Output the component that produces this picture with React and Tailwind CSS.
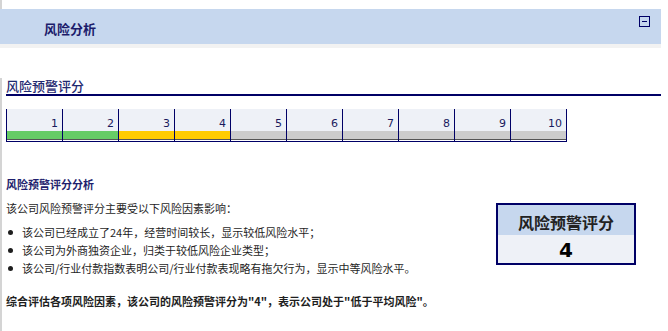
export default function App() {
  const cells = [1, 2, 3, 4, 5, 6, 7, 8, 9, 10];
  const barColor = (n) => (n <= 2 ? "bg-[#66cc66]" : n <= 4 ? "bg-[#ffcc00]" : "bg-[#cccccc]");
  const bullets = [
    "该公司已经成立了24年，经营时间较长，显示较低风险水平；",
    "该公司为外商独资企业，归类于较低风险企业类型；",
    "该公司/行业付款指数表明公司/行业付款表现略有拖欠行为，显示中等风险水平。",
  ];
  return (
    <div className="w-[668px] h-[331px] bg-white overflow-hidden font-['Noto_Sans_CJK_SC',sans-serif] text-[#1e1e1e]">
      <div className="h-[9px] border-l-2 border-[#d4d4d4]" />
      <div className="w-[661px] h-[35px] bg-[#c6d7ee] flex items-start justify-between pl-[44px] pr-[11px]">
        <span className="mt-[12px] text-[13px] leading-[16px] font-bold text-[#1c1c6b]">风险分析</span>
        <span className="mt-[7px] w-[11px] h-[11px] border border-[#000066] flex items-center justify-center">
          <span className="w-[5px] h-[1px] bg-[#000066]" />
        </span>
      </div>
      <div className="w-[661px] h-[4px] bg-[#f2f2f2]" />
      <div className="border-l-2 border-[#d4d4d4] pl-[4px] h-[283px]">
        <div className="mt-[30px] w-[655px] border-b-2 border-[#000066] text-[13px] leading-[16px] font-medium text-[#1f2970]">
          风险预警评分
        </div>
        <div className="mt-[13px] flex w-[561px] border-r border-b border-[#000066]">
          {cells.map((n) => (
            <div key={n} className="w-[56px] border-l border-[#000066] flex flex-col">
              <div className="h-[22px] bg-[#eef1f7] flex items-end justify-end pr-[4px] pb-[1px] font-['DejaVu_Sans',sans-serif] text-[11px] leading-[13px] text-[#1a1a5e]">
                {n}
              </div>
              <div className={`h-[8px] ${barColor(n)}`} />
              <div className="h-[1px] bg-[#555555]" />
              <div className="h-[1px] bg-white" />
            </div>
          ))}
        </div>
        <div className="flex items-start">
          <div className="w-[490px]">
            <div className="mt-[35px] text-[11px] leading-[15px] font-bold text-[#1f1f6e]">风险预警评分分析</div>
            <div className="mt-[9px] text-[11px] leading-[15px]">该公司风险预警评分主要受以下风险因素影响：</div>
            <ul className="mt-[7px]">
              {bullets.map((b) => (
                <li key={b} className="flex items-center h-[18px] text-[11px] leading-[18px]">
                  <span className="ml-[2px] w-[5px] h-[5px] rounded-full bg-[#1e1e1e]" />
                  <span className="ml-[9px]">{b}</span>
                </li>
              ))}
            </ul>
            <div className="mt-[17px] text-[11px] leading-[15px] font-bold">
              综合评估各项风险因素，该公司的风险预警评分为"4"，表示公司处于"低于平均风险"。
            </div>
          </div>
          <div className="mt-[61px] w-[140px] h-[62px] border-2 border-[#000066] flex flex-col">
            <div className="h-[30px] bg-[#c6d7ee] flex items-center justify-center pt-[3px] text-[16px] leading-[20px] font-bold text-[#222]">
              风险预警评分
            </div>
            <div className="flex-1 bg-[#eef1f7] flex items-center justify-center pt-[2px] font-['DejaVu_Sans',sans-serif] text-[20px] leading-[22px] font-bold text-black">
              4
            </div>
          </div>
        </div>
      </div>
    </div>
  );
}
